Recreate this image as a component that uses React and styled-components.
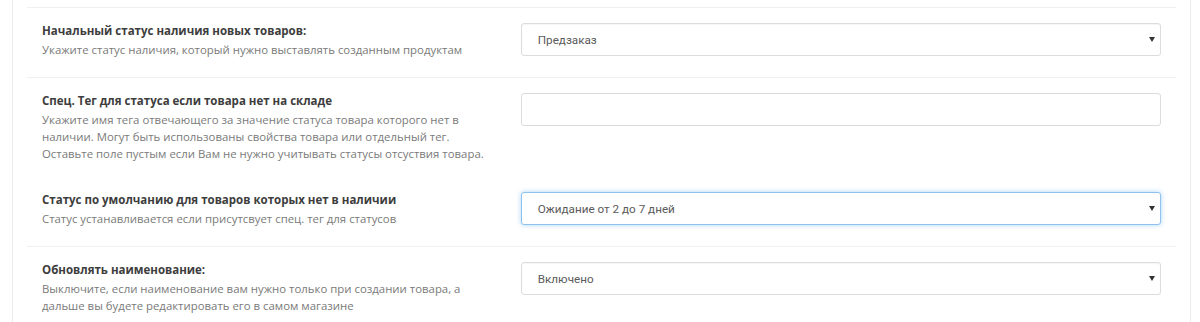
import React from 'react'
import styled, { createGlobalStyle } from 'styled-components'

const GlobalStyle = createGlobalStyle`
    html, body {
        margin: 0;
        padding: 0;
        background: #fff;
        font-family: "Open Sans", "Liberation Sans", sans-serif;
    }
`

const settings = [
    {
        id: 'status',
        title: 'Начальный статус наличия новых товаров:',
        text: 'Укажите статус наличия, который нужно выставлять созданным продуктам',
        type: 'select',
        value: 'Предзаказ',
    },
    {
        id: 'tag',
        title: 'Спец. Тег для статуса если товара нет на складе',
        text: 'Укажите имя тега отвечающего за значение статуса товара которого нет в наличии. Могут быть использованы свойства товара или отдельный тег. Оставьте поле пустым если Вам не нужно учитывать статусы отсуствия товара.',
        type: 'input',
        value: '',
        noBorder: true,
    },
    {
        id: 'default',
        title: 'Статус по умолчанию для товаров которых нет в наличии',
        text: 'Статус устанавливается если присутсвует спец. тег для статусов',
        type: 'select',
        value: 'Ожидание от 2 до 7 дней',
        focused: true,
    },
    {
        id: 'name',
        title: 'Обновлять наименование:',
        text: 'Выключите, если наименование вам нужно только при создании товара, а дальше вы будете редактировать его в самом магазине',
        type: 'select',
        value: 'Включено',
    },
]

const Arrow = () => (
    <svg width='6' height='5' viewBox='0 0 6 5'>
        <path d='M0 0 H6 L3 5 Z' fill='#333' />
    </svg>
)

const App = () => {
    return (
        <>
            <GlobalStyle />
            <Panel>
                {settings.map((item, i) => (
                    <Row key={item.id} $topBorder={i === 0 || !settings[i - 1].noBorder}>
                        <Label>
                            <Title>{item.title}</Title>
                            <Help>{item.text}</Help>
                        </Label>
                        <Control>
                            {item.type === 'select' ? (
                                <SelectBox $focused={item.focused}>
                                    <span>{item.value}</span>
                                    <Caret><Arrow /></Caret>
                                </SelectBox>
                            ) : (
                                <TextInput defaultValue={item.value} />
                            )}
                        </Control>
                    </Row>
                ))}
            </Panel>
        </>
    )
}

const Panel = styled.div`
    margin: 0 9px 0 12px;
    min-height: 322px;
    border-left: 1px solid #ececec;
    border-right: 1px solid #ececec;
    padding: 7px 14px 0;
    box-sizing: border-box;
`

const Row = styled.div`
    display: grid;
    grid-template-columns: 5fr 7fr;
    align-items: start;
    border-top: 1px solid ${(p) => (p.$topBorder ? '#f0f0f0' : 'transparent')};
    padding-top: 14px;
`

const Label = styled.div`
    padding: 0 15px 14px;
`

const Title = styled.div`
    font-size: 11.5px;
    font-weight: 700;
    color: #3d3d3d;
    line-height: 17px;
`

const Help = styled.div`
    font-size: 11.4px;
    color: #7a7a7a;
    line-height: 17px;
    margin-top: 2px;
`

const Control = styled.div`
    padding: 1px 15px 21px;
`

const field = `
    box-sizing: border-box;
    width: 100%;
    height: 33px;
    border-radius: 3px;
    background: #fff;
    font-family: Roboto, "Liberation Sans", sans-serif;
    font-size: 11.7px;
    color: #5a5a5a;
`

const SelectBox = styled.div`
    ${field}
    display: flex;
    align-items: center;
    justify-content: space-between;
    padding: 0 5px 0 16px;
    border: 1px solid ${(p) => (p.$focused ? '#8ec2ee' : '#dcdcdc')};
    box-shadow: ${(p) =>
        p.$focused
            ? '0 0 5px rgba(102, 175, 233, 0.55)'
            : 'inset 0 1px 1px rgba(0, 0, 0, 0.04)'};
`

const Caret = styled.span`
    display: flex;
    align-items: center;
`

const TextInput = styled.input`
    ${field}
    display: block;
    border: 1px solid #dcdcdc;
    padding: 0 16px;
    outline: none;
`

export default App
